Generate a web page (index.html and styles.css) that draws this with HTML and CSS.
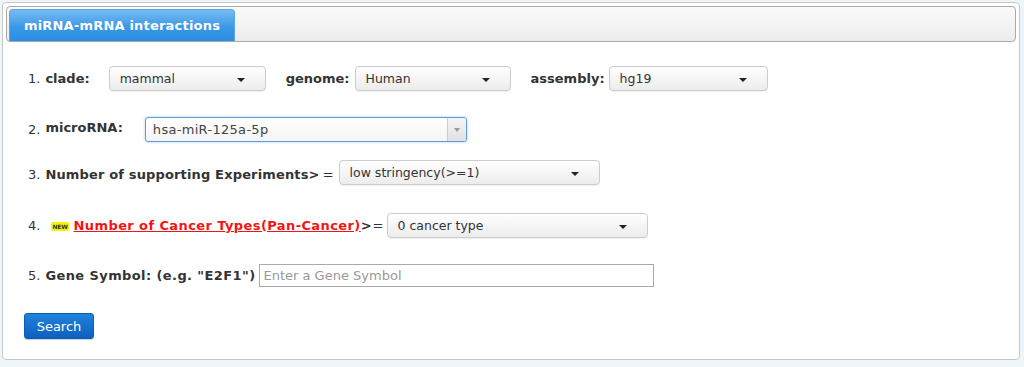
FILE: index.html
```html
<!DOCTYPE html>
<html lang="en">
<head>
    <meta charset="UTF-8">
    <title>miRNA-mRNA interactions</title>
    <link rel="stylesheet" href="styles.css">
</head>
<body>
    <div class="panel">
        <div class="tab-bar">
            <div class="tab">miRNA-mRNA interactions</div>
        </div>
        <form class="query">
            <div class="row row-1">
                <span class="num">1.</span>
                <label class="lbl">clade:</label>
                <div class="dropdown w-clade">mammal<span class="caret"></span></div>
                <label class="lbl lbl-gap">genome:</label>
                <div class="dropdown w-genome">Human<span class="caret"></span></div>
                <label class="lbl lbl-gap">assembly:</label>
                <div class="dropdown w-assembly">hg19<span class="caret"></span></div>
            </div>
            <div class="row row-2">
                <span class="num">2.</span>
                <label class="lbl">microRNA:</label>
                <div class="chosen">
                    <span class="chosen-text">hsa-miR-125a-5p</span>
                    <span class="chosen-arrow"><span class="mini-caret"></span></span>
                </div>
            </div>
            <div class="row row-3">
                <span class="num">3.</span>
                <label class="lbl wide-lbl">Number of supporting Experiments&gt;</label><span class="eq">=</span>
                <div class="dropdown w-wide">low stringency(&gt;=1)<span class="caret"></span></div>
            </div>
            <div class="row row-4">
                <span class="num">4.</span>
                <span class="new-badge">NEW</span>
                <a class="lbl link" href="#">Number of Cancer Types(Pan-Cancer)</a><span class="lbl">&gt;</span><span class="eq">=</span>
                <div class="dropdown w-wide">0 cancer type<span class="caret"></span></div>
            </div>
            <div class="row row-5">
                <span class="num">5.</span>
                <label class="lbl gene-lbl">Gene Symbol: (e.g. "E2F1")</label>
                <input class="gene" type="text" placeholder="Enter a Gene Symbol">
            </div>
            <button class="search" type="button">Search</button>
        </form>
    </div>
</body>
</html>
```

FILE: styles.css
```css
body {
    margin: 0;
    padding: 2px 4px 0 2px;
    background: #eef5f9;
    font-family: 'DejaVu Sans', Verdana, sans-serif;
    color: #333;
}

.panel {
    height: 358px;
    box-sizing: border-box;
    background: #fff;
    border: 1px solid #c8c8c8;
    border-radius: 4px;
    padding: 3px;
}

.tab-bar {
    height: 36px;
    box-sizing: border-box;
    border: 1px solid #aaa;
    border-radius: 4px;
    background: linear-gradient(#fafafa, #ececec);
    padding: 3px 0 0 2px;
    display: flex;
    align-items: flex-end;
}

.tab {
    width: 226px;
    height: 32px;
    box-sizing: border-box;
    background: linear-gradient(#79bbf2 0%, #3a98e6 55%, #2b8de2 100%);
    border: 1px solid #5aa7e8;
    border-bottom: none;
    border-radius: 4px 4px 0 0;
    color: #fff;
    font-size: 13px;
    font-weight: bold;
    letter-spacing: 0.2px;
    display: flex;
    align-items: center;
    justify-content: center;
    padding-bottom: 1px;
}

.query {
    padding: 0 0 0 21px;
}

.row {
    display: flex;
    align-items: center;
    height: 25px;
    font-size: 13px;
}

.row-1 { margin-top: 24px; }
.row-2 { margin-top: 26px; }
.row-3 { margin-top: 18px; }
.row-4 { margin-top: 28px; }
.row-5 { margin-top: 25px; }

.num {
    color: #333;
    margin-left: 1px;
    margin-right: 5px;
}

.lbl {
    font-weight: bold;
    color: #333;
}

.lbl-gap {
    margin-left: 20px;
}

.wide-lbl {
    letter-spacing: 0.15px;
}

.gene-lbl {
    letter-spacing: 0.4px;
}

.eq {
    margin: 0 5px 0 3px;
}

.dropdown {
    position: relative;
    height: 25px;
    box-sizing: border-box;
    border: 1px solid #ccc;
    border-radius: 4px;
    background: linear-gradient(#fff, #ececec);
    box-shadow: 0 1px 1px rgba(0,0,0,0.06);
    font-size: 12.5px;
    color: #333;
    padding: 0 10px;
    display: flex;
    align-items: center;
}

.caret {
    position: absolute;
    right: 20px;
    top: 11px;
    border-left: 4px solid transparent;
    border-right: 4px solid transparent;
    border-top: 4px solid #222;
}

.w-clade { width: 157px; margin-left: 19px; }
.w-genome { width: 156px; margin-left: 5px; }
.w-assembly { width: 159px; margin-left: 4px; }
.w-wide { width: 261px; }

.row-2 .lbl { margin-top: -5px; }
.row-3 .num, .row-3 .lbl, .row-3 .eq { margin-top: 4px; }

.chosen {
    width: 322px;
    height: 25px;
    box-sizing: border-box;
    margin-left: 22px;
    border: 1px solid #5b9dd9;
    border-radius: 3px;
    background: linear-gradient(#fff, #f4f4f4);
    box-shadow: 0 0 3px rgba(82,168,236,0.5);
    display: flex;
    align-items: center;
}

.chosen-text {
    flex: 1;
    font-size: 13px;
    color: #444;
    padding-left: 7px;
    letter-spacing: 0.3px;
}

.chosen-arrow {
    width: 18px;
    height: 100%;
    border-left: 1px solid #ccc;
    background: linear-gradient(#f4f4f4, #e2e2e2);
    display: flex;
    align-items: center;
    justify-content: center;
    border-radius: 0 3px 3px 0;
}

.mini-caret {
    border-left: 3px solid transparent;
    border-right: 3px solid transparent;
    border-top: 4px solid #999;
}

.new-badge {
    font-size: 6px;
    font-weight: bold;
    color: #333;
    background: #f5f500;
    border-radius: 2px;
    padding: 1px 1px;
    margin: 2px 5px 0 6px;
    letter-spacing: -0.2px;
}

.link {
    color: #f21414;
    text-decoration: underline;
    letter-spacing: 0.4px;
}

.row-4 .eq {
    margin: 0 3px 0 1px;
}

.gene {
    width: 395px;
    height: 23px;
    box-sizing: border-box;
    margin: 0 0 0 3px;
    border: 1px solid #aaa;
    padding: 0 4px;
    font-family: 'DejaVu Sans', Verdana, sans-serif;
    font-size: 13px;
    color: #333;
}

.gene::placeholder {
    color: #999;
}

.search {
    margin: 25px 0 0 -3px;
    width: 70px;
    height: 26px;
    border: 1px solid #0b5fb0;
    border-radius: 3px;
    background: linear-gradient(#1e83dc, #0e5fc0);
    color: #fff;
    font-family: 'DejaVu Sans', Verdana, sans-serif;
    font-size: 13px;
    padding: 0;
    box-shadow: 0 1px 1px rgba(0,0,0,0.2);
}
```
